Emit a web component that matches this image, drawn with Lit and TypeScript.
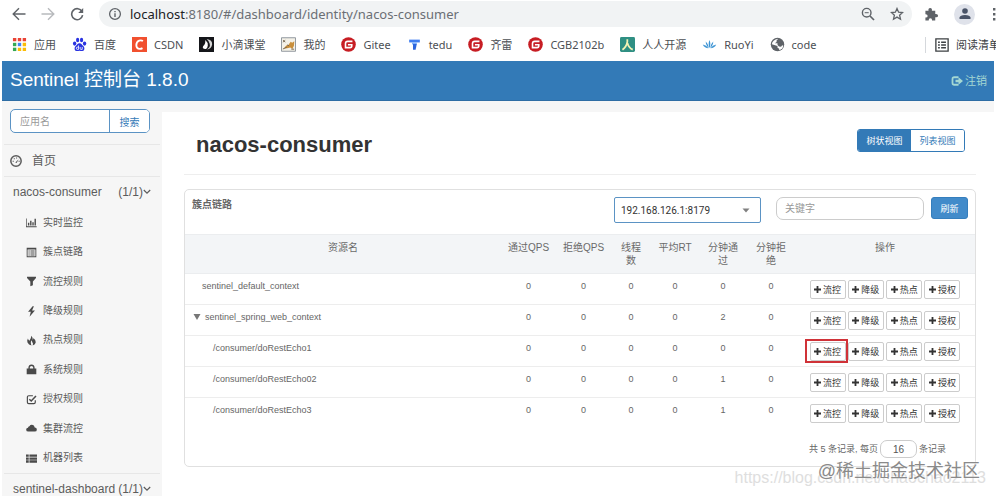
import { LitElement, html, css, svg, nothing } from "lit";
import { customElement } from "lit/decorators.js";
import { classMap } from "lit/directives/class-map.js";

const icon = (box: string, body: unknown, cls = "") =>
  html`<svg class="icon ${cls}" viewBox=${box} aria-hidden="true">${body}</svg>`;

const gitee = svg`<circle cx="8" cy="8" r="7.8" fill="#c71d23"/>
  <path d="M12.200 4.700H7.200Q4.800 4.700 4.800 7v4.300H9.600Q11.500 11.300 11.500 9.600V8.200H7.400" fill="none" stroke="#fff" stroke-width="1.700"/>`;

const bookmarks: { name: string; art: unknown }[] = [
  {
    name: "应用",
    art: svg`<path fill="#ea4335" d="M1 1h3.6v3.6H1zM6.2 1h3.6v3.6H6.2zM11.4 1H15v3.6h-3.6z"/>
      <path fill="#34a853" d="M1 6.2h3.6v3.6H1z"/><path fill="#4285f4" d="M6.2 6.2h3.6v3.6H6.2z"/>
      <path fill="#fbbc05" d="M11.4 6.2H15v3.6h-3.6zM6.2 11.4h3.6V15H6.2zM11.4 11.4H15V15h-3.6z"/>
      <path fill="#34a853" d="M1 11.4h3.6V15H1z"/>`,
  },
  {
    name: "百度",
    art: svg`<g fill="#2932e1"><ellipse cx="2.8" cy="7" rx="1.8" ry="2.3"/><ellipse cx="6" cy="3.2" rx="1.7" ry="2.4"/>
      <ellipse cx="10.2" cy="3.2" rx="1.7" ry="2.4"/><ellipse cx="13.4" cy="7" rx="1.8" ry="2.3"/>
      <path d="M8 6.6c2 0 2.8 2 4.2 3.2 1.6 1.400 1.400 4.800-1 5.200-1.400.2-2-.3-3.200-.3s-1.800.5-3.200.3c-2.400-.4-2.600-3.800-1-5.200C5.200 8.600 6 6.600 8 6.600z"/></g>
      <path d="M7 9v4.200H5.600q-1 0-1-1.200t1-1.200H7M8.700 10.600v1.800q0 .8.800.8h1.400v-2.600" fill="none" stroke="#fff" stroke-width=".9"/>`,
  },
  {
    name: "CSDN",
    art: svg`<path fill="#f1502f" d="M0 0h16v16H0z"/><path d="M11.700 4.300Q9.800 3.200 7.700 3.900 4.700 5 4.600 8.600q0 4 3.600 4 1.600 0 3-.8" fill="none" stroke="#fff" stroke-width="2"/>`,
  },
  {
    name: "小滴课堂",
    art: svg`<path fill="#15161a" d="M0 0h16v16H0z"/><path d="M8.200 2.200Q14.500 3.200 14 8q-.8 4.600-5.600 5.400Q12.600 11 11.400 7.200 10.600 4.200 8.200 2.200z" fill="#d8d8d8"/>
      <path d="M6.800 3.200q3 2.600 2.600 6.200-.4 2.600-2 3.400-2.800.2-3.400-1.600.2-1.600 1.600-2.600Q7 6.400 6.800 3.200z" fill="#fff"/>`,
  },
  {
    name: "我的",
    art: svg`<path d="M.5.800h15v14.400H.5z" fill="#f4f1e8" stroke="#8a9199"/><path d="M3 12.200l2.600-3.200 2.200-.6 2.600-3.400 1.500 1 2.300-1.600-.4 5-1.700 3.300-2.200-1.400-3.400.6z" fill="#c98f3c"/>
      <path d="M2 5.500l2.500-2M2.200 3.400l2.400 2M2 12.800l4.200-2M11 13h3M6.500 8.400l2 1" stroke="#6b5a42" stroke-width=".9"/>`,
  },
  { name: "Gitee", art: gitee },
  {
    name: "tedu",
    art: svg`<path d="M2.300 2.800h11.400v3H2.300z" fill="#3f7df0"/><path d="M5.300 5.800h5.200v2.200H5.300z" fill="#7eb0fb"/><path d="M6.400 7.500h4l-1.200 6H6.400z" fill="#2d66dd"/>`,
  },
  { name: "齐雷", art: gitee },
  { name: "CGB2102b", art: gitee },
  {
    name: "人人开源",
    art: svg`<rect width="16" height="16" rx="1.500" fill="#2f8f83"/><path d="M7.800 2.300v3Q7 10.500 2.600 13.700M8 6.500q1.200 5 5.600 7" fill="none" stroke="#f3f3b4" stroke-width="1.900"/>`,
  },
  {
    name: "RuoYi",
    art: svg`<path d="M8 3.200q1.800 4 0 8.800-1.800-4.800 0-8.800zM4 4.800q3 2.800 3.400 7Q4 9 4 4.800zM12 4.800q0 4.200-3.400 7Q9 7.600 12 4.800zM.8 8q4 .8 6.200 4Q2.800 12 .8 8zM15.200 8q-2 4-6.200 4 2.200-3.200 6.200-4z" fill="#3d94d4"/>`,
  },
  {
    name: "code",
    art: svg`<circle cx="8" cy="8" r="7.200" fill="#5f6368"/><path d="M8.800 1.800L7 3.800v1.400L5.200 6.600H8v2L9.600 10l2.200.3L13 8.800l1.200.4Q13.600 13 9.800 14v-1.400L8 11.500V9.600L2 7.700Q2.400 3 8.800 1.800z" fill="#fff"/>`,
  },
];

const menu: { name: string; art: unknown }[] = [
  { name: "实时监控", art: svg`<path d="M1 2v11.500h14.500v1.300H0V2zM2.800 8.500h2v4h-2zM6 5.500h2v7H6zM9.200 7.500h2v5h-2zM12.400 2.500h2v10h-2z"/>` },
  { name: "簇点链路", art: svg`<path fill-rule="evenodd" d="M1 1h14v14H1zM2.300 3.600v10h11.400v-10zM3.600 5h1.800v1.600H3.600zM6.500 5h6v1.500h-6zM3.600 7.900h1.800v1.600H3.600zM6.500 7.900h6v1.500h-6zM3.600 10.800h1.800v1.500H3.600zM6.500 10.800h6v1.500h-6z"/>` },
  { name: "流控规则", art: svg`<path d="M1.500 1h13v2L10 8v5.500L6.300 15V8L1.500 3z"/>` },
  { name: "降级规则", art: svg`<path d="M9.600.5L3 8.500h4L5.200 15.500 13 6.700H8.800L11.500.5z"/>` },
  { name: "热点规则", art: svg`<path d="M7.500 1q3 2.500 2.200 6 1.300-.8 1-2.600 3.800 3 3.500 6.200-.4 3.400-4.500 4.600 1.300-2.400-.5-4.600Q8.500 9 8.600 7.600 6.500 9.500 7 11.500q.2 1.800 1 3.700Q3.800 14.500 2.200 11 1 8 2.800 5.200 3.200 7.500 5 8.500 7.800 5 7.500 1z"/>` },
  { name: "系统规则", art: svg`<path fill-rule="evenodd" d="M3.500 6.500V5Q3.800.8 8 .8T12.500 5v1.500H15V15H1V6.500zM5.500 6.500h5V5Q10.300 2.800 8 2.800T5.500 5z"/>` },
  { name: "授权规则", art: svg`<path d="M13.500 9v3q0 2-2 2H4q-2 0-2-2V4.500q0-2 2-2h6" fill="none" stroke="currentColor" stroke-width="1.700"/><path d="M4.800 7.600L7.600 10.200 14.500 2.800" fill="none" stroke="currentColor" stroke-width="2.200"/>` },
  { name: "集群流控", art: svg`<path d="M3.500 12.500Q.3 12.500.2 9.700.3 7.200 2.900 6.900 3 4.800 5 4.700 6.300 2.500 8.800 2.700 12.300 3 12.700 6.700 15.800 7 15.800 9.700q0 2.800-3.300 2.800z"/>` },
  { name: "机器列表", art: svg`<path d="M0 2h4v3.500H0zM5 2h11v3.500H5zM0 6.400h4v3.400H0zM5 6.400h11v3.400H5zM0 10.700h4V14H0zM5 10.700h11V14H5z"/>` },
];

type Row = { name: string; level: string; open?: boolean; passed: number; marked?: boolean };
const rows: Row[] = [
  { name: "sentinel_default_context", level: "root", passed: 0 },
  { name: "sentinel_spring_web_context", level: "parent", open: true, passed: 2 },
  { name: "/consumer/doRestEcho1", level: "child", passed: 0, marked: true },
  { name: "/consumer/doRestEcho02", level: "child", passed: 1 },
  { name: "/consumer/doRestEcho3", level: "child", passed: 1 },
];
const actions = ["流控", "降级", "热点", "授权"];
const columns = ["通过QPS", "拒绝QPS", "线程数", "平均RT", "分钟通过", "分钟拒绝"];

const shared = css`
  * { box-sizing: border-box; }
  button, input, select { font-family: inherit; margin: 0; padding: 0; }
  button { cursor: pointer; }
  a { color: inherit; text-decoration: none; }
  .icon { display: block; flex: none; fill: currentColor; }
`;

@customElement("browser-bar")
export class BrowserBar extends LitElement {
  static styles = [shared, css`
    :host { display: block; background: #fff; font-family: "Noto Sans", "Noto Sans CJK SC", sans-serif; color: #4c4f54; }
    .tools { display: flex; align-items: center; height: 28px; padding-left: 12px; overflow: hidden; }
    .tool { display: flex; flex: none; border: 0; background: none; color: #5f6368; margin-right: 15px; }
    .tool.off { color: #b8babd; }
    .s14 { width: 14px; height: 14px; }
    .s15 { width: 15px; height: 15px; }
    .address { display: flex; align-items: center; flex: 1; min-width: 0; height: 26px; border-radius: 13px; background: #f1f3f4; padding: 0 8px 0 9px; margin-right: 12px; color: #5f6368; }
    .url { flex: 1; margin-left: 8px; font-size: 13px; line-height: 20px; white-space: nowrap; color: #6b6f74; }
    .host { color: #202124; }
    .address .tool { margin: 0 0 0 15px; }
    .avatar { display: flex; align-items: center; justify-content: center; width: 21px; height: 21px; border-radius: 50%; background: #dfe2ea; color: #4a5468; border: 0; flex: none; }
    .dots { width: 4px; height: 14px; color: #5f6368; margin-left: 17px; }
    .marks { display: flex; align-items: center; height: 33px; padding-left: 12px; font-size: 11px; line-height: 16px; overflow: hidden; white-space: nowrap; }
    .list { display: flex; flex: 1; gap: 16px; }
    .mark { display: flex; align-items: center; gap: 7px; flex: none; }
    .reading { display: flex; align-items: center; gap: 7px; flex: none; width: 71px; height: 16px; padding-left: 9px; border-left: 1px solid #d5d8dc; overflow: hidden; color: #3c4043; }
  `];
  render() {
    return html`
      <nav class="tools" aria-label="浏览器">
        <button class="tool" aria-label="后退">${icon("0 0 14 14", svg`<path d="M13.500 7H1.500M7 1.200L1.200 7 7 12.800" fill="none" stroke="currentColor" stroke-width="1.400"/>`, "s14")}</button>
        <button class="tool off" aria-label="前进">${icon("0 0 14 14", svg`<path d="M.5 7h12M7 1.200L12.800 7 7 12.800" fill="none" stroke="currentColor" stroke-width="1.400"/>`, "s14")}</button>
        <button class="tool" aria-label="刷新页面">${icon("0 0 14 14", svg`<path d="M12 4.500A5.500 5.500 0 1 0 12.600 8.200" fill="none" stroke="currentColor" stroke-width="1.600"/><path d="M13.200 1v5H8.200z"/>`, "s14")}</button>
        <div class="address">
          ${icon("0 0 14 14", svg`<circle cx="7" cy="7" r="5.400" fill="none" stroke="currentColor" stroke-width="1.300"/><path d="M6.300 6.300h1.400v3.600H6.300zM6.300 3.900h1.400v1.400H6.300z"/>`, "s14")}
          <span class="url"><span class="host">localhost</span>:8180/#/dashboard/identity/nacos-consumer</span>
          <button class="tool" aria-label="缩放">${icon("0 0 14 14", svg`<circle cx="5.700" cy="5.700" r="4.300" fill="none" stroke="currentColor" stroke-width="1.400"/><path d="M9 9l4 4" stroke="currentColor" stroke-width="1.700"/><path d="M3.700 5.200h4v1h-4z"/>`, "s14")}</button>
          <button class="tool" aria-label="收藏">${icon("0 0 14 14", svg`<path d="M7 1.500l1.600 3.700 4 .3-3 2.700.9 4L7 10.100l-3.500 2.100.9-4-3-2.700 4-.3z" fill="none" stroke="currentColor" stroke-width="1.300"/>`, "s14")}</button>
        </div>
        <button class="tool" aria-label="扩展程序">${icon("0 0 16 16", svg`<path d="M1.500 4h3.300q-.5-3 1.800-3t1.800 3H12v3.400q3-.4 3 1.800t-3 1.800v3.500H8.600q.2-2.400-1.800-2.400t-1.800 2.400H1.500v-3.300q2.400.2 2.400-1.700T1.500 7.700z"/>`, "s15")}</button>
        <button class="avatar" aria-label="用户">${icon("0 0 14 14", svg`<circle cx="7" cy="4" r="2.800"/><path d="M1.500 12V10.500Q2 8 7 8t5.500 2.500V12z"/>`, "s14")}</button>
        ${icon("0 0 4 14", svg`<path d="M1 1h2.400v2.400H1zM1 6h2.400v2.400H1zM1 11h2.400v2.400H1z"/>`, "dots")}
      </nav>
      <nav class="marks" aria-label="书签">
        <div class="list">
          ${bookmarks.map((b) => html`<a class="mark" href="#">${icon("0 0 16 16", b.art, "s15")}<span>${b.name}</span></a>`)}
        </div>
        <a class="reading" href="#">${icon("0 0 16 16", svg`<path d="M1 1h14v14H1z" fill="none" stroke="currentColor" stroke-width="1.500"/><path d="M3.500 4h2v1.600h-2zM7 4h5.500v1.600H7zM3.500 7.200h2v1.600h-2zM7 7.200h5.500v1.600H7zM3.500 10.400h2V12h-2zM7 10.400h5.500V12H7z"/>`, "s14")}<span>阅读清单</span></a>
      </nav>`;
  }
}

@customElement("side-menu")
export class SideMenu extends LitElement {
  static styles = [shared, css`
    :host { display: block; padding: 8px 2px 0; color: #5c5c5c; font-size: 12px; line-height: 16px; }
    .search { display: flex; height: 24px; margin: 0 10px 11px 6px; border: 1px solid #5b93c4; border-radius: 5px; background: #fff; overflow: hidden; }
    .field { flex: 1; min-width: 0; border: 0; outline: 0; background: none; padding-left: 9px; font-size: 10px; color: #555; }
    .field::placeholder { color: #999; opacity: 1; }
    .go { width: 40px; border: 0; border-left: 1px solid #5b93c4; background: #fff; color: #337ab7; font-size: 10px; }
    .home { display: flex; align-items: center; gap: 10px; height: 32px; padding-left: 6px; border-top: 1px solid #e7e7e7; }
    .gauge { width: 12px; height: 12px; }
    .app { display: flex; align-items: center; justify-content: space-between; height: 30px; padding: 0 9px; border-top: 1px solid #e7e7e7; }
    .count { display: flex; align-items: center; }
    .chev { width: 8px; height: 8px; }
    .items { display: grid; grid-auto-rows: 1fr; height: 267px; margin: 0; padding: 2px 0 0 22px; list-style: none; font-size: 10px; }
    .item { display: flex; align-items: center; gap: 6px; height: 100%; }
    .glyph { width: 11px; height: 11px; color: #4a4a4a; }
  `];
  app(name: string) {
    return html`<a class="app" href="#"><span>${name}</span><span class="count">(1/1)${icon("0 0 8 8", svg`<path d="M.8 2l3.200 3.200L7.200 2" fill="none" stroke="currentColor" stroke-width="1.200"/>`, "chev")}</span></a>`;
  }
  render() {
    return html`
      <div class="search"><input class="field" type="text" placeholder="应用名" aria-label="应用名" /><button class="go">搜索</button></div>
      <a class="home" href="#">${icon("0 0 16 16", svg`<circle cx="8" cy="8" r="6.900" fill="none" stroke="currentColor" stroke-width="2"/><path d="M7 10l4.500-4.500-2.600 5.300zM3.500 7.500h1.600V9H3.500zM5 4.300h1.500v1.500H5zM8 3.300h1.500v1.500H8zM11.400 7.500H13V9h-1.600z"/>`, "gauge")}<span>首页</span></a>
      ${this.app("nacos-consumer")}
      <ul class="items">
        ${menu.map((m) => html`<li><a class="item" href="#">${icon("0 0 16 16", m.art, "glyph")}<span>${m.name}</span></a></li>`)}
      </ul>
      ${this.app("sentinel-dashboard")}`;
  }
}

@customElement("resource-panel")
export class ResourcePanel extends LitElement {
  static styles = [shared, css`
    :host { display: block; border: 1px solid #e0e0e0; border-radius: 5px; color: #666; font-size: 9px; line-height: 12px; }
    .bar { display: flex; align-items: flex-start; height: 44px; padding: 7px 7px 0; }
    .title { flex: 1; margin: 0; font-size: 10px; line-height: 16px; font-weight: 700; color: #666; }
    .pick { position: relative; width: 147px; height: 26px; margin-right: 15px; }
    .select { width: 100%; height: 100%; appearance: none; border: 1px solid #5b93c4; border-radius: 2px; background: #fff; padding-left: 6px; font-family: Roboto, sans-serif; font-size: 10px; color: #333; }
    .arrow { position: absolute; right: 11px; top: 11px; width: 8px; height: 5px; color: #808080; pointer-events: none; }
    .key { width: 148px; height: 23px; margin-right: 7px; border: 1px solid #ccc; border-radius: 7px; padding-left: 8px; font-size: 10px; background: #fff; color: #555; }
    .key::placeholder { color: #999; opacity: 1; }
    .refresh { width: 37px; height: 22px; border: 1px solid #357ebd; border-radius: 3px; background: #428bca; color: #fff; font-size: 9px; }
    .grid { width: 100%; table-layout: fixed; border-collapse: separate; border-spacing: 0; }
    th { height: 40px; padding: 6px 6px 0; border-top: 1px solid #ebedef; border-bottom: 1px solid #ebedef; background: #f3f5f7; font-size: 10px; line-height: 13px; font-weight: 400; vertical-align: top; color: #6a6a6a; }
    td { height: 31px; padding: 6px 0 0; border-bottom: 1px solid #ededed; text-align: center; vertical-align: top; }
    tr:last-child td { border-bottom: 0; }
    .w55 { width: 55px; }
    .w40 { width: 40px; }
    .w48 { width: 48px; }
    .w180 { width: 180px; }
    .name { text-align: left; }
    .root { padding-left: 17px; }
    .parent { padding-left: 8px; }
    .child { padding-left: 28px; }
    .node { display: flex; align-items: center; gap: 4px; }
    .fold { width: 8px; height: 6px; color: #777; }
    .acts { display: flex; justify-content: space-between; width: 151px; margin: 0 auto; }
    .act { position: relative; display: flex; align-items: center; justify-content: center; gap: 2px; width: 36px; height: 19px; border: 1px solid #ccc; border-radius: 2px; background: #fff; color: #333; font-size: 9px; line-height: 12px; }
    .plus { width: 7px; height: 7px; }
    .marked::before { content: ""; position: absolute; inset: -4px -3px -3px -6px; border: 2px solid #d03238; }
    .foot { display: flex; align-items: center; justify-content: flex-end; gap: 2px; height: 37px; padding: 3px 29px 0 0; }
    .size { width: 37px; height: 18px; border: 1px solid #ccc; border-radius: 7px; text-align: center; font-size: 10px; color: #555; background: #fff; }
  `];
  render() {
    return html`
      <div class="bar">
        <h2 class="title">簇点链路</h2>
        <div class="pick">
          <select class="select" aria-label="机器"><option>192.168.126.1:8179</option></select>
          ${icon("0 0 8 5", svg`<path d="M.5.5h7L4 4.500z"/>`, "arrow")}
        </div>
        <input class="key" type="text" placeholder="关键字" aria-label="关键字" />
        <button class="refresh">刷新</button>
      </div>
      <table class="grid">
        <colgroup><col /><col class="w55" /><col class="w55" /><col class="w40" /><col class="w48" /><col class="w48" /><col class="w48" /><col class="w180" /></colgroup>
        <thead><tr><th>资源名</th>${columns.map((c) => html`<th>${c}</th>`)}<th>操作</th></tr></thead>
        <tbody>
          ${rows.map((r) => html`<tr>
            <td class="name ${r.level}"><span class="node">${r.open ? icon("0 0 8 6", svg`<path d="M.5 0h7L4 6z"/>`, "fold") : nothing}${r.name}</span></td>
            <td>0</td><td>0</td><td>0</td><td>0</td><td>${r.passed}</td><td>0</td>
            <td><div class="acts">${actions.map((a, i) => html`<button class=${classMap({ act: true, marked: !!r.marked && i === 0 })}>${icon("0 0 7 7", svg`<path d="M2.600 0h1.800v2.600H7v1.800H4.400V7H2.600V4.400H0V2.600h2.600z"/>`, "plus")}<span>${a}</span></button>`)}</div></td>
          </tr>`)}
        </tbody>
      </table>
      <label class="foot"><span>共 5 条记录, 每页</span><input class="size" type="text" value="16" /><span>条记录</span></label>`;
  }
}

@customElement("app-root")
export class AppRoot extends LitElement {
  static styles = [shared, css`
    :host { position: relative; display: flex; flex-direction: column; height: 100vh; overflow: hidden; background: #fff; font-family: "Liberation Sans", "Noto Sans CJK SC", sans-serif; }
    browser-bar, .top { flex: none; }
    .top { display: flex; align-items: center; justify-content: space-between; height: 40px; margin: 0 2px; padding: 0 7px 0 8px; background: #337ab7; border-bottom: 1px solid #2e6da4; color: #fff; }
    .brand { font-size: 19px; line-height: 24px; padding-bottom: 2px; }
    .logout { display: flex; align-items: center; gap: 2px; font-size: 11px; line-height: 16px; color: #a5d8d3; }
    .exit { width: 12px; height: 12px; }
    .body { display: flex; flex: 1; min-height: 0; margin: 0 2px; background: #f6f6f6; }
    side-menu { flex: none; width: 160px; }
    main { flex: 1; min-width: 0; margin-top: 11px; padding: 0 18px 0 22px; background: #fff; }
    .head { display: flex; align-items: flex-start; justify-content: space-between; padding: 17px 11px 13px 12px; margin-bottom: 14px; border-bottom: 1px solid #eee; }
    h1 { margin: 0; font-size: 22px; line-height: 32px; color: #333; }
    .views { display: flex; height: 23px; border: 1px solid #337ab7; border-radius: 3px; overflow: hidden; }
    .view { width: 53px; border: 0; background: #fff; color: #337ab7; font-size: 9px; line-height: 12px; }
    .view.on { background: #337ab7; color: #fff; }
    .mark { position: absolute; white-space: nowrap; pointer-events: none; }
    .blog { right: 10px; bottom: 6px; font-size: 16px; line-height: 24px; color: #dedede; }
    .site { right: 16px; bottom: 12px; font-size: 18px; line-height: 26px; color: #8a8a8a; text-shadow: 0 0 2px #fff; }
  `];
  render() {
    return html`
      <browser-bar></browser-bar>
      <header class="top">
        <a class="brand" href="#">Sentinel 控制台 1.8.0</a>
        <a class="logout" href="#">${icon("0 0 16 16", svg`<path d="M10 3H4.500Q2 3 2 5.500v5Q2 13 4.500 13H10" fill="none" stroke="currentColor" stroke-width="2.400"/><path d="M6 6.300h4V3l6 5-6 5V9.700H6z"/>`, "exit")}<span>注销</span></a>
      </header>
      <div class="body">
        <side-menu></side-menu>
        <main>
          <div class="head">
            <h1>nacos-consumer</h1>
            <div class="views"><button class="view on">树状视图</button><button class="view">列表视图</button></div>
          </div>
          <resource-panel></resource-panel>
        </main>
      </div>
      <div class="mark blog">https://blog.csdn.net/chaochao2113</div>
      <div class="mark site">@稀土掘金技术社区</div>`;
  }
}
